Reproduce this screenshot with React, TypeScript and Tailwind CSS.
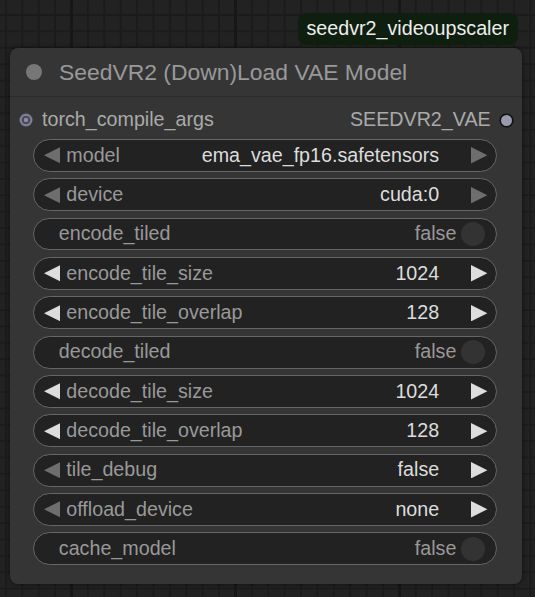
import React from 'react';

type Widget =
  | { kind: 'combo'; label: string; value: string; left: boolean; right: boolean }
  | { kind: 'number'; label: string; value: string }
  | { kind: 'toggle'; label: string; value: string };

const widgets: Widget[] = [
  { kind: 'combo', label: 'model', value: 'ema_vae_fp16.safetensors', left: false, right: false },
  { kind: 'combo', label: 'device', value: 'cuda:0', left: false, right: false },
  { kind: 'toggle', label: 'encode_tiled', value: 'false' },
  { kind: 'number', label: 'encode_tile_size', value: '1024' },
  { kind: 'number', label: 'encode_tile_overlap', value: '128' },
  { kind: 'toggle', label: 'decode_tiled', value: 'false' },
  { kind: 'number', label: 'decode_tile_size', value: '1024' },
  { kind: 'number', label: 'decode_tile_overlap', value: '128' },
  { kind: 'combo', label: 'tile_debug', value: 'false', left: false, right: true },
  { kind: 'combo', label: 'offload_device', value: 'none', left: false, right: true },
  { kind: 'toggle', label: 'cache_model', value: 'false' },
];

function Arrow({ dir, on }: { dir: 'left' | 'right'; on: boolean }) {
  return (
    <svg width="16.4" height="16.4" viewBox="0 0 10 10" className="shrink-0">
      <polygon
        points={dir === 'left' ? '10,0 0,5 10,10' : '0,0 10,5 0,10'}
        fill={on ? '#dddddd' : '#6e6e6e'}
      />
    </svg>
  );
}

function WidgetRow({ w }: { w: Widget }) {
  if (w.kind === 'toggle') {
    return (
      <div className="h-[32.8px] rounded-full border-[1.5px] border-[#666] bg-[#222] flex items-center pl-[24.5px] pr-[11.2px] leading-none">
        <span className="flex-1 text-[#999]">{w.label}</span>
        <span className="text-[#999]">{w.value}</span>
        <span className="ml-[5px] w-[23.6px] h-[23.6px] rounded-full bg-[#333]" />
      </div>
    );
  }
  const left = w.kind === 'number' ? true : w.left;
  const right = w.kind === 'number' ? true : w.right;
  return (
    <div className="h-[32.8px] rounded-full border-[1.5px] border-[#666] bg-[#222] flex items-center leading-none">
      <span className="ml-[9.6px]">
        <Arrow dir="left" on={left} />
      </span>
      <span className="ml-[6px] flex-1 text-[#999]">{w.label}</span>
      <span className="text-[#ddd]">{w.value}</span>
      <span className="ml-[32px] mr-[8.6px]">
        <Arrow dir="right" on={right} />
      </span>
    </div>
  );
}

export default function App() {
  return (
    <div
      className="w-[535px] h-[597px] overflow-hidden bg-[#222222] bg-[linear-gradient(to_right,#171717_3px,transparent_3px),linear-gradient(to_right,#1b1b1b_2px,transparent_2px),linear-gradient(to_bottom,#1b1b1b_2px,transparent_2px)] bg-[size:164px_100%,16.4px_16.4px,16.4px_16.4px] bg-[position:70px_0,5px_0,0_14px] pt-[13px]"
      style={{ fontFamily: '"Liberation Sans", Arial, sans-serif' }}
    >
      <div className="flex justify-end pr-[17px]">
        <div className="h-[32px] px-[9px] rounded-[8px] bg-[#0f1f0f] text-[#eeeeee] text-[19.7px] flex items-center leading-none">
          seedvr2_videoupscaler
        </div>
      </div>

      <div className="mt-[3.3px] ml-[10px] w-[511.7px] h-[535.7px] rounded-[8px] bg-[#353535] shadow-[0_0_4px_rgba(0,0,0,0.6)]">
        <div className="h-[49px] flex items-center pl-[16px] border-b border-[#2b2b2b]">
          <span className="w-[16px] h-[16px] rounded-full bg-[#777]" />
          <span className="ml-[17px] text-[22.9px] text-[#999] leading-none">
            SeedVR2 (Down)Load VAE Model
          </span>
        </div>

        <div className="h-[41.7px] pt-[4px] flex items-center text-[19.7px] leading-none">
          <svg width="14" height="14" viewBox="0 0 14 14" className="ml-[9px] shrink-0">
            <circle cx="7" cy="7" r="6.5" fill="#7d7d96" />
            <circle cx="7" cy="7" r="4" fill="#45454f" />
            <circle cx="7" cy="7" r="2.3" fill="#8a8aa4" />
          </svg>
          <span className="ml-[9px] flex-1 text-[#aaa]">torch_compile_args</span>
          <span className="text-[#aaa]">SEEDVR2_VAE</span>
          <svg width="15" height="15" viewBox="0 0 15 15" className="ml-[8px] mr-[8px] shrink-0">
            <circle cx="7.5" cy="7.5" r="6.3" fill="#9999b0" stroke="#111" strokeWidth="1.6" />
          </svg>
        </div>

        <div className="ml-[23.3px] mr-[24.5px] flex flex-col gap-[6.56px] text-[19.7px]">
          {widgets.map((w, i) => (
            <WidgetRow key={i} w={w} />
          ))}
        </div>
      </div>
    </div>
  );
}
